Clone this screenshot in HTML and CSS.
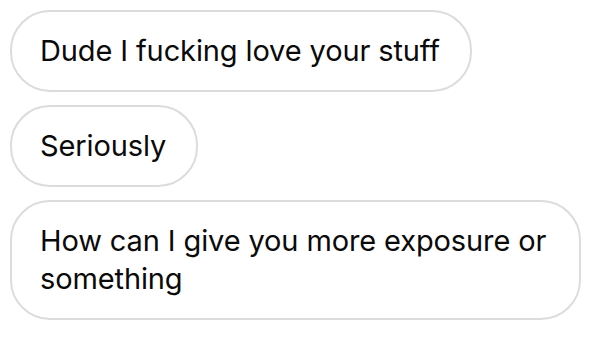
FILE: index.html
```html
<!DOCTYPE html>
<html>
<head>
<meta charset="utf-8">
<link rel="stylesheet" href="styles.css">
</head>
<body>
<div class="thread">
  <div class="bubble">Dude I fucking love your stuff</div>
  <div class="bubble">Seriously</div>
  <div class="bubble">How can I give you more exposure or something</div>
</div>
</body>
</html>
```
FILE: styles.css
```css
html, body {
  margin: 0;
  background: #ffffff;
}
body {
  width: 600px;
  height: 340px;
  overflow: hidden;
}
.thread {
  display: flex;
  flex-direction: column;
  align-items: flex-start;
  gap: 13px;
  padding: 10px;
}
.bubble {
  box-sizing: border-box;
  max-width: 571px;
  border: 2px solid #dcdcdc;
  border-radius: 40px;
  padding: 20px 30px 20px 28px;
  font-family: Inter, "Liberation Sans", Arial, sans-serif;
  font-size: 29px;
  letter-spacing: -0.12px;
  line-height: 38px;
  color: #0a0a0a;
}
```
